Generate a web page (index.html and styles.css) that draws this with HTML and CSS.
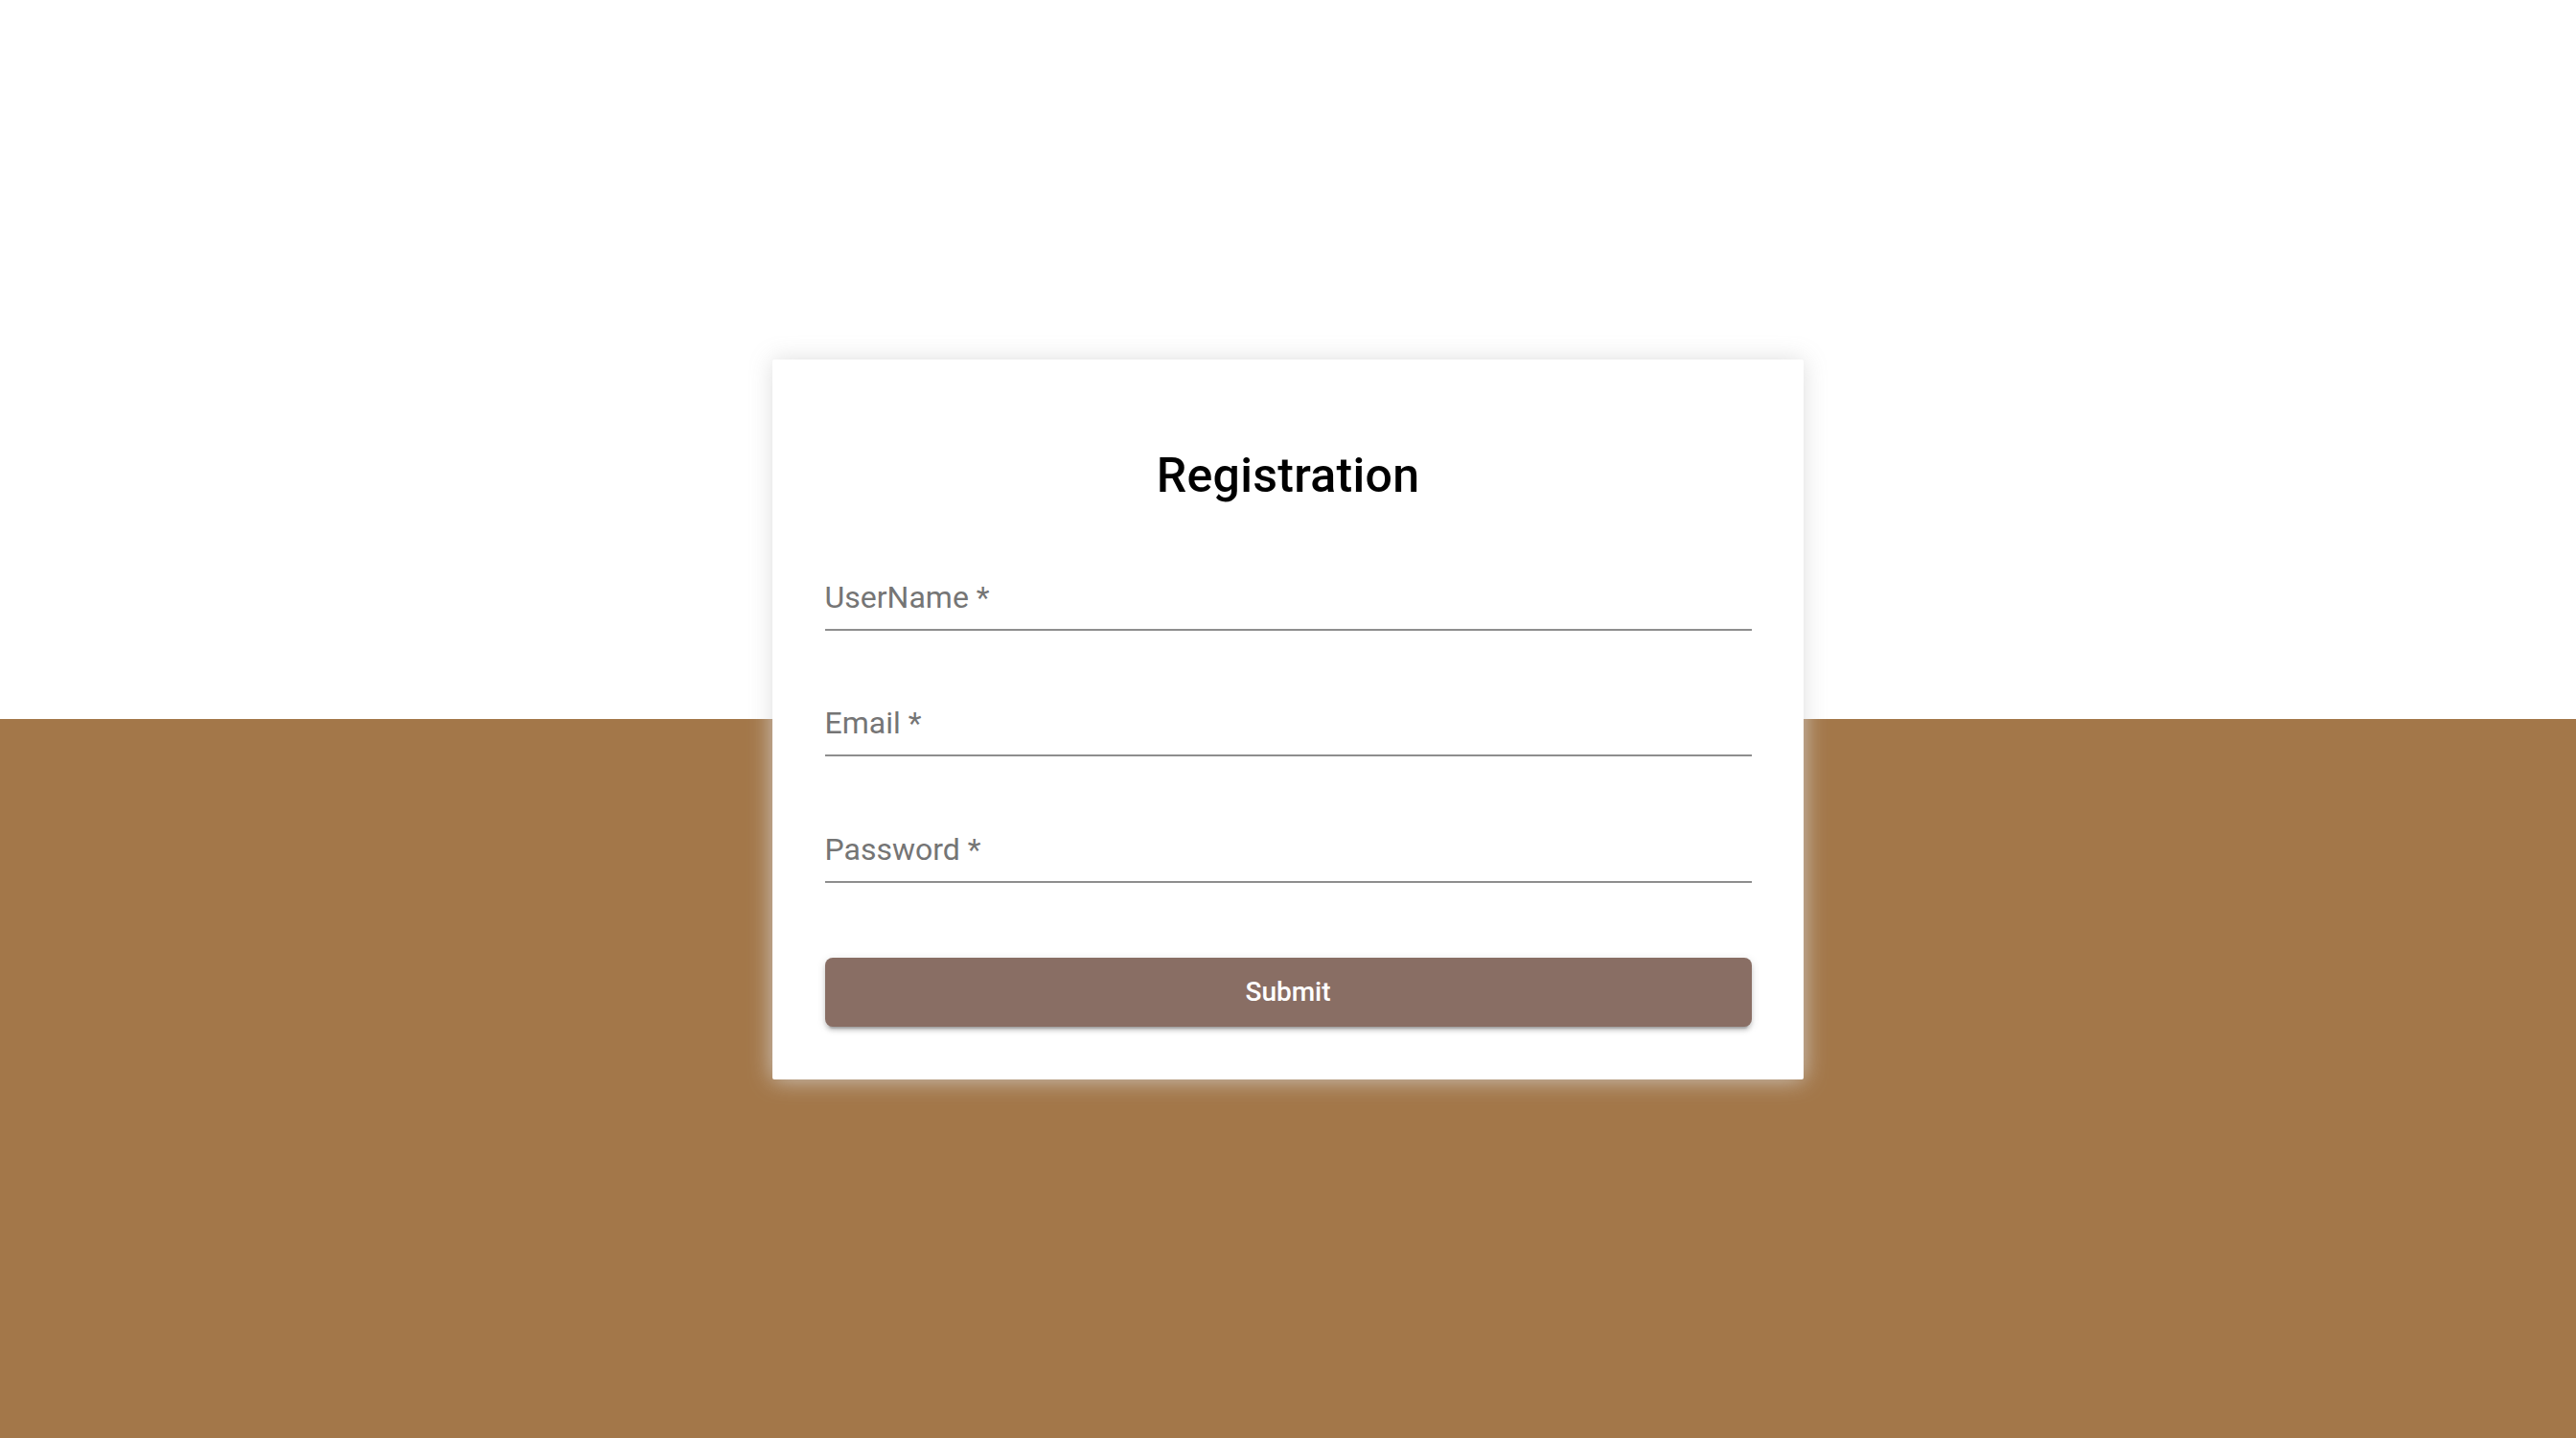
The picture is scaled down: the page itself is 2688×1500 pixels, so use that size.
FILE: index.html
```html
<!DOCTYPE html>
<html lang="en">
<head>
<meta charset="utf-8">
<title>Registration</title>
<link rel="stylesheet" href="styles.css">
</head>
<body>
<main class="page">
  <form class="card">
    <h1 class="title">Registration</h1>
    <div class="fields">
      <div class="field"><label class="label">UserName *</label></div>
      <div class="field"><label class="label">Email *</label></div>
      <div class="field"><label class="label">Password *</label></div>
    </div>
    <button type="button" class="submit">Submit</button>
  </form>
</main>
</body>
</html>
```
FILE: styles.css
```css
html, body {
  margin: 0;
  padding: 0;
}
body {
  font-family: Roboto, "Liberation Sans", sans-serif;
  background: linear-gradient(to bottom, #ffffff 0, #ffffff 50%, #a37749 50%, #a37749 100%);
  min-height: 100vh;
}
.page {
  min-height: 100vh;
  display: flex;
  align-items: center;
  justify-content: center;
}
.card {
  width: 1076px;
  box-sizing: border-box;
  padding: 91px 54.5px 55px;
  background: #ffffff;
  border-radius: 2px;
  box-shadow: 0 0 24px rgba(215, 215, 215, 0.85);
  display: flex;
  flex-direction: column;
}
.title {
  margin: 0 0 81px;
  font-size: 50px;
  line-height: 60px;
  font-weight: 500;
  color: #000000;
  text-align: center;
  letter-spacing: 0.3px;
}
.fields {
  display: flex;
  flex-direction: column;
  gap: 80.5px;
}
.field {
  padding-bottom: 17px;
  border-bottom: 2px solid #8e8e8e;
}
.label {
  display: block;
  font-size: 32px;
  line-height: 32px;
  color: #757575;
}
.submit {
  margin-top: 78px;
  height: 72px;
  border: none;
  border-radius: 8px;
  background: #896e64;
  color: #ffffff;
  font-family: Roboto, "Liberation Sans", sans-serif;
  font-size: 28px;
  font-weight: 500;
  line-height: 72px;
  padding: 0;
  box-shadow: 0 6px 2px -4px rgba(0, 0, 0, 0.2), 0 4px 4px 0 rgba(0, 0, 0, 0.14), 0 2px 10px 0 rgba(0, 0, 0, 0.12);
}
```
